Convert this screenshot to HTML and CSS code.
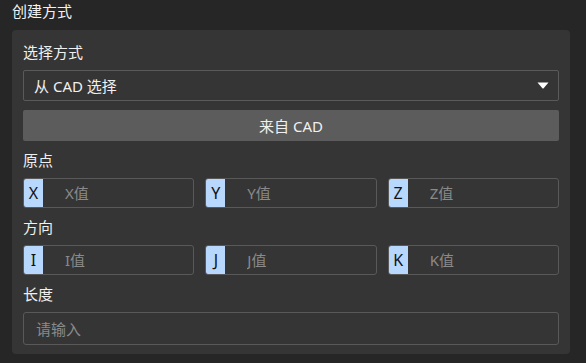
FILE: index.html
```html
<!DOCTYPE html>
<html lang="zh-CN">
<head>
    <meta charset="utf-8">
    <link rel="stylesheet" href="styles.css">
</head>
<body>
    <div class="title">创建方式</div>

    <div class="panel">
        <div class="section">
            <div class="label">选择方式</div>
            <div class="select">
                <span>从 CAD 选择</span>
                <svg class="arrow" width="12" height="7" viewBox="0 0 12 7">
                    <path d="M0.5 0.5 H11.5 L6.6 6.2 Q6 6.8 5.4 6.2 Z" fill="#ffffff"/>
                </svg>
            </div>
            <button class="cad-btn">来自 CAD</button>
        </div>

        <!-- origin -->
        <div class="section">
            <div class="label">原点</div>
            <div class="row">
                <div class="field"><span class="tag">X</span><input type="text" placeholder="X值"></div>
                <div class="field"><span class="tag">Y</span><input type="text" placeholder="Y值"></div>
                <div class="field"><span class="tag">Z</span><input type="text" placeholder="Z值"></div>
            </div>
        </div>

        <!-- direction -->
        <div class="section">
            <div class="label">方向</div>
            <div class="row">
                <div class="field"><span class="tag">I</span><input type="text" placeholder="I值"></div>
                <div class="field"><span class="tag">J</span><input type="text" placeholder="J值"></div>
                <div class="field"><span class="tag">K</span><input type="text" placeholder="K值"></div>
            </div>
        </div>

        <div class="section">
            <div class="label">长度</div>
            <input class="plain" type="text" placeholder="请输入">
        </div>
    </div>
</body>
</html>
```

FILE: styles.css
```css
body {
    margin: 0;
    background-color: #262626;
    color: #eeeeee;
    font-family: "Noto Sans", "Noto Sans CJK SC", sans-serif;
    font-size: 15px;
}

.title {
    height: 22px;
    line-height: 22px;
    padding-left: 12px;
    margin-bottom: 8px;
    color: #f2f2f2;
}

.panel {
    margin: 0 16px 0 12px;
    padding: 11px 11px 9px 11px;
    background-color: #353535;
    border-radius: 4px;
    display: flex;
    flex-direction: column;
    gap: 8px;
}

.section {
    display: flex;
    flex-direction: column;
}

.label {
    height: 22px;
    line-height: 22px;
    margin-bottom: 7px;
    color: #f0f0f0;
}

.select {
    height: 29px;
    border: 1px solid #5a5a5a;
    border-radius: 2px;
    display: flex;
    align-items: center;
    justify-content: space-between;
    padding: 0 9px 0 10px;
    color: #f0f0f0;
}

.arrow {
    display: block;
}

.cad-btn {
    margin-top: 9px;
    height: 31px;
    border: none;
    border-radius: 2px;
    background-color: #5c5c5c;
    color: #f0f0f0;
    font-family: inherit;
    font-size: 15px;
    padding: 0;
}

.row {
    display: grid;
    grid-template-columns: 1fr 1fr 1fr;
    gap: 11px;
}

.field {
    height: 28px;
    border: 1px solid #595959;
    border-radius: 3px;
    display: flex;
    overflow: hidden;
}

.tag {
    width: 19px;
    flex-shrink: 0;
    background-color: #b8d7fd;
    color: #111111;
    font-size: 16px;
    display: flex;
    align-items: center;
    justify-content: center;
}

.field input {
    flex: 1;
    min-width: 0;
    border: none;
    outline: none;
    background: transparent;
    padding: 0 0 0 22px;
    color: #eeeeee;
    font-family: inherit;
    font-size: 15px;
}

input::placeholder {
    color: #8a8a8a;
}

.plain {
    height: 31px;
    border: 1px solid #595959;
    border-radius: 3px;
    background: transparent;
    outline: none;
    padding: 0 12px;
    color: #eeeeee;
    font-family: inherit;
    font-size: 15px;
}
```
